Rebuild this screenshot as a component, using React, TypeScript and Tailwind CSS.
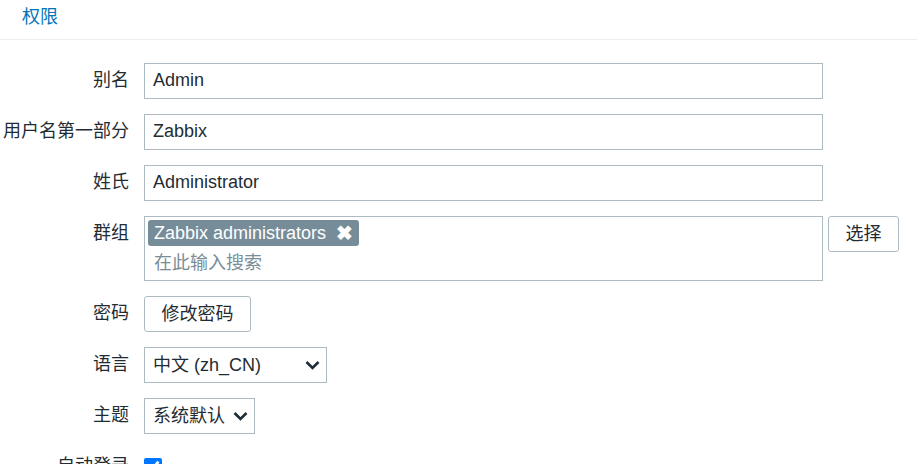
import React from "react";

const labelCls =
  "w-[129px] shrink-0 text-right leading-[35px] whitespace-nowrap";
const boxBorder = "border border-[#acbbc2]";

function Chevron() {
  return (
    <svg width="15" height="10" viewBox="0 0 15 10" className="shrink-0">
      <path d="M1.5 2 L7.5 8 L13.5 2" fill="none" stroke="#1f2c33" strokeWidth="2.6" />
    </svg>
  );
}

function Row({ label, children }: { label: string; children: React.ReactNode }) {
  return (
    <div className="flex items-start gap-[15px]">
      <div className={labelCls}>{label}</div>
      {children}
    </div>
  );
}

function TextField({ value }: { value: string }) {
  return (
    <div className={`w-[679px] h-[36px] ${boxBorder} bg-white px-[8px] leading-[32px]`}>
      {value}
    </div>
  );
}

export default function App() {
  return (
    <div className="w-[917px] h-[464px] overflow-hidden bg-white text-[18px] text-[#1f2c33] font-['Liberation_Sans','Noto_Sans_CJK_SC',sans-serif]">
      <div className="h-[40px] border-b border-[#ebeef0] pl-[22px] pt-[4px] leading-[26px] text-[#0275b8]">
        权限
      </div>

      <div className="flex flex-col gap-[15px] pt-[23px]">
        <Row label="别名">
          <TextField value="Admin" />
        </Row>
        <Row label="用户名第一部分">
          <TextField value="Zabbix" />
        </Row>
        <Row label="姓氏">
          <TextField value="Administrator" />
        </Row>

        <Row label="群组">
          <div className="flex items-start gap-[5px]">
            <div className={`w-[679px] h-[65px] ${boxBorder} bg-white px-[3px] pt-[3px]`}>
              <div className="inline-flex items-center h-[26px] rounded-[3px] bg-[#768d99] pl-[6px] pr-[6px] text-white leading-[26px]">
                <span>Zabbix administrators</span>
                <span className="ml-[10px] text-[20px] font-bold leading-none">✖</span>
              </div>
              <div className="pl-[6px] leading-[33px] text-[#7b8d96]">在此输入搜索</div>
            </div>
            <button className={`h-[36px] w-[71px] ${boxBorder} rounded-[3px] bg-white leading-[33px]`}>
              选择
            </button>
          </div>
        </Row>

        <Row label="密码">
          <button className={`h-[36px] w-[107px] ${boxBorder} rounded-[3px] bg-white leading-[33px]`}>
            修改密码
          </button>
        </Row>

        <Row label="语言">
          <div className={`flex items-center justify-between w-[183px] h-[36px] ${boxBorder} bg-white pl-[8px] pr-[6px]`}>
            <span className="leading-[32px]">中文 (zh_CN)</span>
            <Chevron />
          </div>
        </Row>

        <Row label="主题">
          <div className={`flex items-center justify-between w-[111px] h-[36px] ${boxBorder} bg-white pl-[8px] pr-[6px]`}>
            <span className="leading-[32px]">系统默认</span>
            <Chevron />
          </div>
        </Row>

        <Row label="自动登录">
          <div className="h-[36px] flex items-center">
            <input
              type="checkbox"
              defaultChecked
              className="w-[18px] h-[18px] m-0 accent-[#0075ff]"
            />
          </div>
        </Row>
      </div>
    </div>
  );
}
